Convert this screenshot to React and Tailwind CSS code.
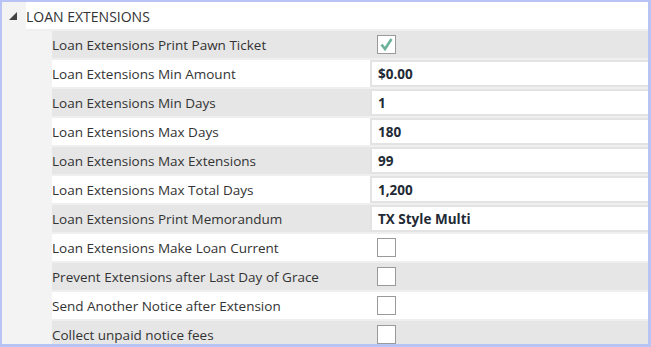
import React from "react"

const rows = [
  { label: "Loan Extensions Print Pawn Ticket", type: "check", checked: true },
  { label: "Loan Extensions Min Amount", value: "$0.00" },
  { label: "Loan Extensions Min Days", value: "1" },
  { label: "Loan Extensions Max Days", value: "180" },
  { label: "Loan Extensions Max Extensions", value: "99" },
  { label: "Loan Extensions Max Total Days", value: "1,200" },
  { label: "Loan Extensions Print Memorandum", value: "TX Style Multi" },
  { label: "Loan Extensions Make Loan Current", type: "check" },
  { label: "Prevent Extensions after Last Day of Grace", type: "check" },
  { label: "Send Another Notice after Extension", type: "check" },
  { label: "Collect unpaid notice fees", type: "check" },
]

function CheckBox({ checked }) {
  return (
    <div className="w-[19px] h-[19px] border border-[#9a9a9a] bg-white flex items-center justify-center">
      {checked && (
        <svg width="15" height="15" viewBox="0 0 15 15">
          <path d="M2.5 7.5 L6 12 L12.5 2" fill="none" stroke="#6cb39c" strokeWidth="2.6" />
        </svg>
      )}
    </div>
  )
}

export default function App() {
  return (
    <div
      className="w-[651px] h-[347px] overflow-hidden bg-[#f3f3f3] border-t-2 border-l-2 border-r-[3px] border-b-[3px] border-[#b9c4f6] text-[13.5px] text-[#333]"
      style={{ fontFamily: '"Segoe UI", "Open Sans", sans-serif' }}
    >
      {/* section header */}
      <div className="flex h-[27px]">
        <div className="w-6 flex items-center pl-[7px]">
          <svg width="8" height="8" viewBox="0 0 8 8">
            <path d="M8 0 L8 8 L0 8 Z" fill="#444" />
          </svg>
        </div>
        <div className="flex-1 bg-white flex items-center pt-[1px] text-[14px] text-[#333]">LOAN EXTENSIONS</div>
      </div>
      <div className="h-[2px] ml-6 bg-[#f0f0f0]" />

      <div className="ml-[50px]">
        {rows.map((r, i) => (
          <div
            key={i}
            className={`flex h-[29px] border-b-2 border-[#efefef] ${i % 2 === 0 ? "bg-[#e6e6e6]" : "bg-white"}`}
          >
            <div className="w-[318px] flex items-center pt-[2px] whitespace-nowrap">{r.label}</div>
            {r.type === "check" ? (
              <div className="flex-1 flex items-center pl-[7px]">
                <CheckBox checked={r.checked} />
              </div>
            ) : (
              <div className="flex-1 bg-white border-2 border-r-0 border-[#e3e3e3] flex items-center pt-[1px] pl-[6px] font-bold text-[#222a35]">
                {r.value}
              </div>
            )}
          </div>
        ))}
      </div>
    </div>
  )
}
